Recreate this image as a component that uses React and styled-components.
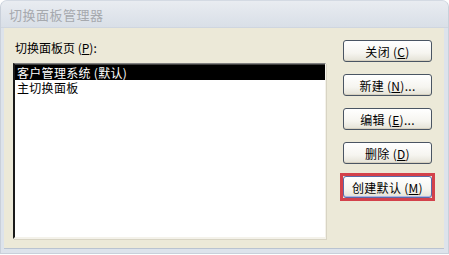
import React from "react";
import styled, { createGlobalStyle } from "styled-components";

const Global = createGlobalStyle`
  html, body { margin: 0; padding: 0; background: #ffffff; }
  body { font-family: "Noto Sans CJK SC", "Liberation Sans", sans-serif; }
`;

const Window = styled.div`
  width: 447px;
  height: 252px;
  display: flex;
  flex-direction: column;
  border-radius: 7px 7px 0 0;
  overflow: hidden;
  background: #dde3eb;
  border: 1px solid #c9d0da;
  border-top-color: #d4dae3;
`;

const TitleBar = styled.div`
  height: 26px;
  display: flex;
  align-items: center;
  padding-left: 8px;
  background: linear-gradient(#e9ecf1, #dfe4eb 60%, #d9dfe7);
  border-bottom: 1px solid #cfd6df;
  color: #a6a9ae;
  font-size: 13px;
  letter-spacing: 0.5px;
`;

const Body = styled.div`
  flex: 1;
  display: flex;
  background: #ece9d8;
  margin: 0 4px 4px 3px;
  padding: 12px 10px 9px 9px;
  gap: 17px;
  border-bottom: 1px solid #b9c3d1;
`;

const LeftCol = styled.div`
  display: flex;
  flex-direction: column;
  width: 313px;
`;

const Label = styled.div`
  font-size: 12px;
  color: #000;
  padding-left: 2px;
  height: 23px;
  line-height: 16px;
`;

const Mn = styled.span`
  text-decoration: underline;
`;

const ListBox = styled.div`
  flex: 1;
  background: #fff;
  border-top: 1px solid #808080;
  border-left: 2px solid #1a1a1a;
  border-right: 1px solid #f4f2ea;
  border-bottom: 2px solid #f4f2ea;
  box-shadow: inset 0 1px 0 #404040, 1px 1px 0 #d8d4c4;
  padding-top: 1px;
`;

const Item = styled.div`
  height: 15px;
  line-height: 15px;
  font-size: 12px;
  padding-left: 2px;
  background: ${(p) => (p.$selected ? "#000" : "transparent")};
  color: ${(p) => (p.$selected ? "#fff" : "#000")};
  white-space: nowrap;
  overflow: hidden;
  letter-spacing: 0.3px;
`;

const RightCol = styled.div`
  display: flex;
  flex-direction: column;
  gap: 12px;
`;

const Highlight = styled.div`
  margin: -3px -3px;
  padding: 0px;
  border: 3px solid #d3414b;
  display: flex;
`;

const Button = styled.div`
  width: 87px;
  height: 20px;
  border: 1px solid ${(p) => (p.$focus ? "#5a6aa8" : "#4a5563")};
  border-radius: 3px;
  background: linear-gradient(#ffffff, #f6f5f0 60%, #e4e2d6);
  box-shadow: inset 0 -1px 0 ${(p) => (p.$focus ? "#aab4e6" : "#d6d0c0")};
  display: flex;
  align-items: center;
  justify-content: center;
  font-size: 12px;
  color: #000;
  white-space: nowrap;
  letter-spacing: 0.3px;
`;

export default function App() {
  return (
    <>
      <Global />
      <Window>
        <TitleBar>切换面板管理器</TitleBar>
        <Body>
          <LeftCol>
            <Label>
              切换面板页 (<Mn>P</Mn>):
            </Label>
            <ListBox>
              <Item $selected>客户管理系统 (默认)</Item>
              <Item>主切换面板</Item>
            </ListBox>
          </LeftCol>
          <RightCol>
            <Button>
              关闭 (<Mn>C</Mn>)
            </Button>
            <Button>
              新建 (<Mn>N</Mn>)...
            </Button>
            <Button>
              编辑 (<Mn>E</Mn>)...
            </Button>
            <Button>
              删除 (<Mn>D</Mn>)
            </Button>
            <Highlight>
              <Button $focus>
                创建默认 (<Mn>M</Mn>)
              </Button>
            </Highlight>
          </RightCol>
        </Body>
      </Window>
    </>
  );
}
